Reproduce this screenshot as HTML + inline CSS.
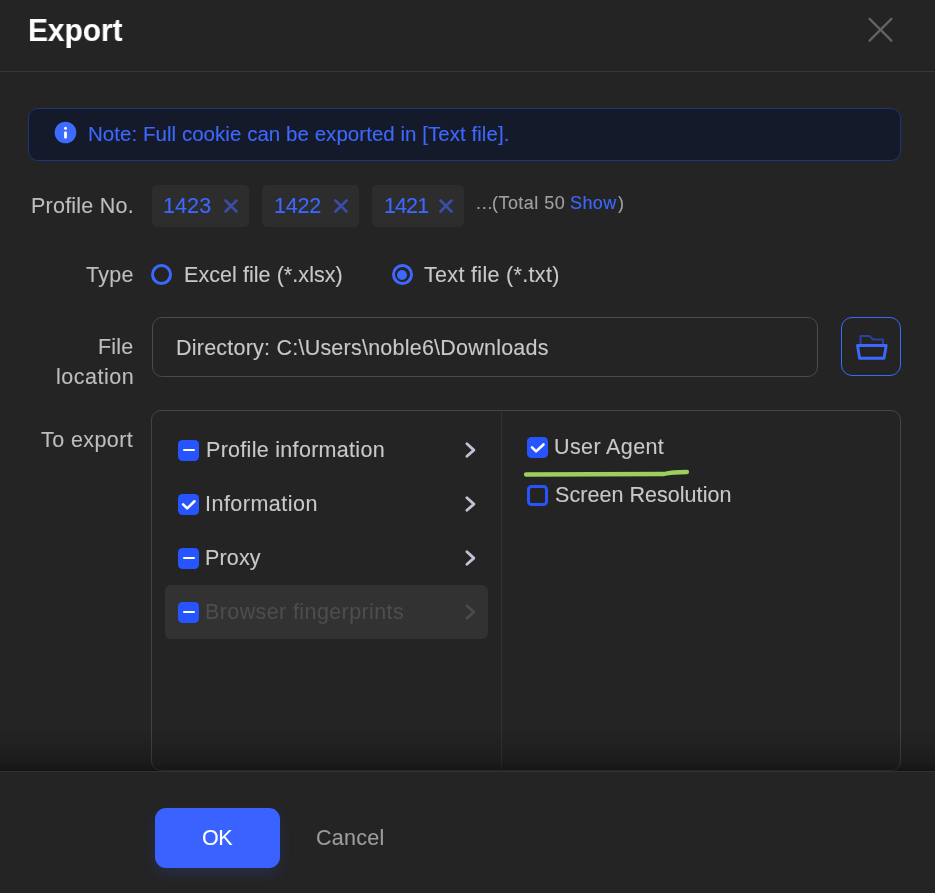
<!DOCTYPE html>
<html><head><meta charset="utf-8"><title>Export</title>
<style>
html,body{margin:0;padding:0}
body{width:935px;height:893px;background:#242424;position:relative;overflow:hidden;font-family:"Liberation Sans",sans-serif}
.a{position:absolute;box-sizing:content-box}
.t{position:absolute;white-space:nowrap;will-change:transform;-webkit-text-stroke:0.12px currentColor}
</style></head><body>
<div class="t" style="left:27.6px;top:13.8px;font-size:32px;line-height:32px;color:#fff;font-weight:700;transform:scaleX(0.932);transform-origin:0 0">Export</div>
<svg class="a" style="left:860px;top:10px" width="40" height="40" viewBox="860 10 40 40"><path d="M869.6 18.9L891.4 40.7M891.4 18.9L869.6 40.7" stroke="#626262" stroke-width="2.4" stroke-linecap="round"/></svg>
<div class="a" style="left:0;top:71px;width:935px;height:1px;background:#383838"></div>
<div class="a" style="left:28px;top:108px;width:871px;height:51px;border:1px solid #1d367c;border-radius:10px;background:#141a2a"></div>
<svg class="a" style="left:54px;top:121px" width="23" height="23" viewBox="0 0 23 23"><circle cx="11.5" cy="11.5" r="10.8" fill="#3d6aff"/><circle cx="11.5" cy="7.3" r="1.5" fill="#fff"/><rect x="10.1" y="10.4" width="2.8" height="7" rx="1" fill="#fff"/></svg>
<div class="t" style="left:88.38px;top:122px;font-size:20.5px;line-height:23px;letter-spacing:0.042px;color:#3d68ff;font-weight:400;">Note: Full cookie can be exported in [Text file].</div>
<div class="t" style="left:31.00px;top:194px;font-size:21.5px;line-height:24px;letter-spacing:0.225px;color:#bdbdbd;font-weight:400;">Profile No.</div>
<div class="a" style="left:152px;top:185px;width:97px;height:42px;background:#2d2d2d;border-radius:5px"></div>
<div class="t" style="left:163.32px;top:194px;font-size:21.5px;line-height:24px;letter-spacing:0.1px;color:#3d68ff">1423</div>
<svg class="a" style="left:224px;top:199px" width="14" height="14" viewBox="0 0 14 14"><path d="M1.5 1.5L12.5 12.5M12.5 1.5L1.5 12.5" stroke="#3a4ea8" stroke-width="2.6" stroke-linecap="round"/></svg>
<div class="a" style="left:262px;top:185px;width:97px;height:42px;background:#2d2d2d;border-radius:5px"></div>
<div class="t" style="left:273.62px;top:194px;font-size:21.5px;line-height:24px;letter-spacing:-0.2px;color:#3d68ff">1422</div>
<svg class="a" style="left:334px;top:199px" width="14" height="14" viewBox="0 0 14 14"><path d="M1.5 1.5L12.5 12.5M12.5 1.5L1.5 12.5" stroke="#3a4ea8" stroke-width="2.6" stroke-linecap="round"/></svg>
<div class="a" style="left:372px;top:185px;width:92px;height:42px;background:#2d2d2d;border-radius:5px"></div>
<div class="t" style="left:383.62px;top:194px;font-size:21.5px;line-height:24px;letter-spacing:-0.9px;color:#3d68ff">1421</div>
<svg class="a" style="left:439px;top:199px" width="14" height="14" viewBox="0 0 14 14"><path d="M1.5 1.5L12.5 12.5M12.5 1.5L1.5 12.5" stroke="#3a4ea8" stroke-width="2.6" stroke-linecap="round"/></svg>
<div class="t" style="left:476.03px;top:193px;font-size:18px;line-height:20px;letter-spacing:0.7px;color:#a0a0a0">...</div>
<div class="t" style="left:492.15px;top:193px;font-size:18px;line-height:20px;letter-spacing:0.45px;color:#a0a0a0">(Total 50</div>
<div class="t" style="left:570.21px;top:193px;font-size:18px;line-height:20px;letter-spacing:0.37px;color:#3d68ff">Show</div>
<div class="t" style="left:617.63px;top:193px;font-size:18px;line-height:20px;letter-spacing:0px;color:#a0a0a0">)</div>
<div class="t" style="left:85.59px;top:263px;font-size:21.5px;line-height:24px;letter-spacing:0.301px;color:#bdbdbd;font-weight:400;">Type</div>
<div class="a" style="left:151px;top:264px;width:15px;height:15px;border:3px solid #3d68ff;border-radius:50%"></div>
<div class="t" style="left:183.50px;top:263px;font-size:21.5px;line-height:24px;letter-spacing:0.059px;color:#c8c8c8;font-weight:400;">Excel file (*.xlsx)</div>
<div class="a" style="left:391.5px;top:264px;width:15px;height:15px;border:3px solid #3d68ff;border-radius:50%"></div>
<div class="a" style="left:397px;top:269.5px;width:10px;height:10px;background:#3d68ff;border-radius:50%"></div>
<div class="t" style="left:423.89px;top:263px;font-size:21.5px;line-height:24px;letter-spacing:0.321px;color:#c8c8c8;font-weight:400;">Text file (*.txt)</div>
<div class="t" style="left:98.10px;top:335px;font-size:21.5px;line-height:24px;letter-spacing:0.163px;color:#bdbdbd;font-weight:400;">File</div>
<div class="t" style="left:55.61px;top:365px;font-size:21.5px;line-height:24px;letter-spacing:0.502px;color:#bdbdbd;font-weight:400;">location</div>
<div class="a" style="left:151.5px;top:317px;width:664px;height:58px;border:1px solid #4b4b4b;border-radius:10px"></div>
<div class="t" style="left:175.50px;top:336px;font-size:21.5px;line-height:24px;letter-spacing:0.229px;color:#c8c8c8;font-weight:400;">Directory: C:\Users\noble6\Downloads</div>
<div class="a" style="left:841.3px;top:317px;width:57.5px;height:57px;border:1.5px solid #3d68ff;border-radius:11px"></div>
<svg class="a" style="left:850px;top:326px" width="44" height="44" viewBox="850 326 44 44"><path d="M860.5 345V336H869.5L873 339.5H883V345" fill="none" stroke="#2842a0" stroke-width="2" stroke-linejoin="round"/><path d="M857.5 345.5H886.2L884 358.2H859.6Z" fill="none" stroke="#3d68ff" stroke-width="2.9" stroke-linejoin="round"/></svg>
<div class="t" style="left:41.39px;top:428px;font-size:21.5px;line-height:24px;letter-spacing:0.411px;color:#bdbdbd;font-weight:400;">To export</div>
<div class="a" style="left:150.8px;top:409.8px;width:748.5px;height:359.5px;border:1.5px solid #444444;border-radius:10px"></div>
<div class="a" style="left:500.5px;top:411px;width:1.2px;height:360px;background:#323232"></div>
<div class="a" style="left:165px;top:585px;width:323px;height:54px;background:#323232;border-radius:6px"></div>
<div class="a" style="left:178px;top:439.5px;width:21px;height:21px;background:#2654ff;border-radius:4.5px"></div>
<div class="a" style="left:182.5px;top:448.7px;width:12px;height:2.7px;background:#fff;border-radius:1.2px"></div>
<div class="t" style="left:205.90px;top:438px;font-size:21.5px;line-height:24px;letter-spacing:0.296px;color:#c8c8c8;font-weight:400;">Profile information</div>
<svg class="a" style="left:462px;top:440px" width="18" height="20" viewBox="0 0 18 20"><path d="M4.9 3.7L11.9 10.1L4.9 16.3" fill="none" stroke="#c2c2d2" stroke-width="2.8" stroke-linecap="round" stroke-linejoin="round"/></svg>
<div class="a" style="left:178px;top:493.5px;width:21px;height:21px;background:#2654ff;border-radius:4.5px"></div>
<svg class="a" style="left:178px;top:493.5px" width="21" height="21" viewBox="0 0 21 21"><path d="M5.1 10.3L9.2 14.4L16.5 7.3" fill="none" stroke="#fff" stroke-width="2.6" stroke-linecap="round" stroke-linejoin="round"/></svg>
<div class="t" style="left:205.23px;top:492px;font-size:21.5px;line-height:24px;letter-spacing:0.48px;color:#c8c8c8;font-weight:400;">Information</div>
<svg class="a" style="left:462px;top:494px" width="18" height="20" viewBox="0 0 18 20"><path d="M4.9 3.7L11.9 10.1L4.9 16.3" fill="none" stroke="#c2c2d2" stroke-width="2.8" stroke-linecap="round" stroke-linejoin="round"/></svg>
<div class="a" style="left:178px;top:547.5px;width:21px;height:21px;background:#2654ff;border-radius:4.5px"></div>
<div class="a" style="left:182.5px;top:556.7px;width:12px;height:2.7px;background:#fff;border-radius:1.2px"></div>
<div class="t" style="left:205.40px;top:546px;font-size:21.5px;line-height:24px;letter-spacing:0.159px;color:#c8c8c8;font-weight:400;">Proxy</div>
<svg class="a" style="left:462px;top:548px" width="18" height="20" viewBox="0 0 18 20"><path d="M4.9 3.7L11.9 10.1L4.9 16.3" fill="none" stroke="#c2c2d2" stroke-width="2.8" stroke-linecap="round" stroke-linejoin="round"/></svg>
<div class="a" style="left:178px;top:601.5px;width:21px;height:21px;background:#2654ff;border-radius:4.5px"></div>
<div class="a" style="left:182.5px;top:610.7px;width:12px;height:2.7px;background:#fff;border-radius:1.2px"></div>
<div class="t" style="left:205.20px;top:600px;font-size:21.5px;line-height:24px;letter-spacing:0.396px;color:#4d4d4d;font-weight:400;">Browser fingerprints</div>
<svg class="a" style="left:462px;top:602px" width="18" height="20" viewBox="0 0 18 20"><path d="M4.9 3.7L11.9 10.1L4.9 16.3" fill="none" stroke="#4a4a4a" stroke-width="2.8" stroke-linecap="round" stroke-linejoin="round"/></svg>
<div class="a" style="left:527px;top:436.5px;width:21px;height:21px;background:#2654ff;border-radius:4.5px"></div>
<svg class="a" style="left:527px;top:436.5px" width="21" height="21" viewBox="0 0 21 21"><path d="M5 10.3L9.1 14.4L16.5 7.5" fill="none" stroke="#fff" stroke-width="2.6" stroke-linecap="round" stroke-linejoin="round"/></svg>
<div class="t" style="left:554.12px;top:435px;font-size:21.5px;line-height:24px;letter-spacing:0.384px;color:#c8c8c8;font-weight:400;">User Agent</div>
<div class="a" style="left:527px;top:484.5px;width:15px;height:15px;border:3px solid #2654ff;border-radius:4.5px"></div>
<div class="t" style="left:554.72px;top:483px;font-size:21.5px;line-height:24px;letter-spacing:0.046px;color:#c8c8c8;font-weight:400;">Screen Resolution</div>
<svg class="a" style="left:515px;top:462px" width="185" height="22" viewBox="515 462 185 22"><path d="M526 474.5L664 474Q672 472 687 472" fill="none" stroke="#9dcf5e" stroke-width="4.3" stroke-linecap="round"/></svg>
<div class="a" style="left:0;top:727px;width:935px;height:44px;background:linear-gradient(to bottom, rgba(0,0,0,0), rgba(0,0,0,0.14) 55%, rgba(0,0,0,0.27) 85%, rgba(0,0,0,0.45))"></div>
<div class="a" style="left:0;top:771px;width:935px;height:122px;background:#242424;border-top:1px solid #313131"></div>
<div class="a" style="left:154.5px;top:808px;width:125px;height:60px;background:#3a62ff;border-radius:11px;box-shadow:0 6px 14px rgba(58,98,255,0.16)"></div>
<div class="t" style="left:201.76px;top:826px;font-size:21.5px;line-height:24px;letter-spacing:-0.49px;color:#ffffff;font-weight:400;">OK</div>
<div class="t" style="left:315.55px;top:826px;font-size:21.5px;line-height:24px;letter-spacing:0.285px;color:#9c9c9c;font-weight:400;">Cancel</div>
</body></html>
